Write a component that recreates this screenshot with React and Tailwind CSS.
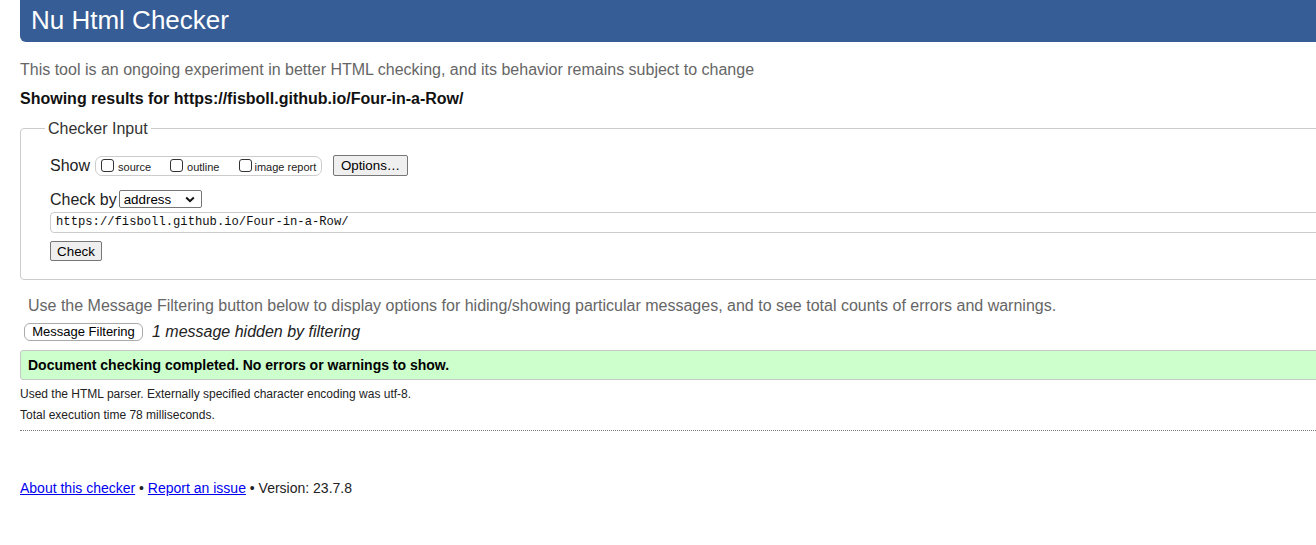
import React from "react";

const Checkbox = ({ className = "" }) => (
  <span className={`inline-block w-[13px] h-[13px] border border-[#333] rounded-[3px] bg-white shrink-0 ${className}`} />
);

const App = () => {
  return (
    <div className="w-[1316px] min-h-[545px] overflow-hidden bg-white text-[#222] font-['Liberation_Sans',Arial,sans-serif]">
      <div className="w-[1360px] pl-[20px]">
        {/* Header */}
        <div className="h-[42px] bg-[#365d95] rounded-bl-[6px] pl-[11px] pt-[1px]">
          <h1 className="text-[26px] leading-normal text-white">Nu Html Checker</h1>
        </div>

        <p className="mt-[18px] text-[16px] leading-[19px] text-[#666]">
          This tool is an ongoing experiment in better HTML checking, and its behavior remains subject to change
        </p>
        <p className="mt-[10px] text-[16px] leading-[19px] font-bold text-[#111]">
          Showing results for https://fisboll.github.io/Four-in-a-Row/
        </p>

        {/* Checker Input */}
        <fieldset className="mt-[11px] border border-[#ccc] rounded-[4px] pl-[29px] pb-[18px]">
          <legend className="ml-[-5px] px-[3px] text-[16px] leading-[19px] text-[#333]">Checker Input</legend>

          <div className="mt-[17px] h-[21px] flex items-center">
            <span className="text-[16px] leading-[19px]">Show</span>
            <div className="ml-[5px] h-[20px] w-[227px] border border-[#ccc] rounded-[7px] flex items-start text-[11px] leading-[13px]">
              <Checkbox className="ml-[5px] mt-[2px]" />
              <span className="ml-[4px] mt-[4px]">source</span>
              <Checkbox className="ml-[19px] mt-[2px]" />
              <span className="ml-[4px] mt-[4px]">outline</span>
              <Checkbox className="ml-[20px] mt-[2px]" />
              <span className="ml-[2px] mt-[4px]">image report</span>
            </div>
            <button className="ml-[11px] h-[21px] w-[75px] bg-[#efefef] border border-[#767676] rounded-[2px] text-[13.33px] leading-[15px] text-black">
              Options…
            </button>
          </div>

          <div className="mt-[13px] h-[20px] flex items-center">
            <span className="text-[16px] leading-[19px]">Check by</span>
            <div className="ml-[2px] h-[18px] w-[83px] border border-[#767676] rounded-[2px] flex items-center justify-between pl-[4px] pr-[6px] text-[13.33px] leading-[15px] text-black">
              <span>address</span>
              <svg width="10" height="7" viewBox="0 0 10 7" fill="none">
                <path d="M1.2 1.5 L5 5.2 L8.8 1.5" stroke="#111" strokeWidth="2" />
              </svg>
            </div>
          </div>

          <div className="mt-[3px] h-[21px] border border-[#ccc] rounded-l-[4px] flex items-center pl-[5px] font-['Liberation_Mono','DejaVu_Sans_Mono',monospace] text-[12.2px] text-[#111]">
            https://fisboll.github.io/Four-in-a-Row/
          </div>

          <button className="mt-[8px] block h-[20px] w-[52px] bg-[#efefef] border border-[#767676] rounded-[2px] text-[13.33px] leading-[15px] text-black">
            Check
          </button>
        </fieldset>

        <p className="mt-[16px] ml-[8px] text-[16px] leading-[19px] text-[#666]">
          Use the Message Filtering button below to display options for hiding/showing particular messages, and to see total counts of errors and warnings.
        </p>

        <div className="mt-[7px] h-[19px] flex items-center">
          <button className="ml-[4px] h-[18px] w-[119px] border border-[#aaa] rounded-[6px] bg-white text-[13px] leading-[15px] text-black">
            Message Filtering
          </button>
          <span className="ml-[9px] text-[16px] leading-[19px] italic text-[#222]">1 message hidden by filtering</span>
        </div>

        <div className="mt-[9px] h-[30px] bg-[#ccffcc] border border-[#c8c8c8] rounded-l-[3px] flex items-center pl-[7px]">
          <span className="text-[14px] leading-[16px] font-bold text-black">
            Document checking completed. No errors or warnings to show.
          </span>
        </div>

        <p className="mt-[7px] text-[12px] leading-[14px] text-[#222]">
          Used the HTML parser. Externally specified character encoding was utf-8.
        </p>
        <p className="mt-[7px] text-[12px] leading-[14px] text-[#222]">Total execution time 78 milliseconds.</p>

        <div className="mt-[8px] border-b border-dotted border-[#777]" />

        <p className="mt-[49px] text-[14px] leading-[16px] text-[#222]">
          <a href="#" className="text-[#0000ee] underline">About this checker</a>
          {" • "}
          <a href="#" className="text-[#0000ee] underline">Report an issue</a>
          {" • Version: 23.7.8"}
        </p>
      </div>
    </div>
  );
};

export default App;
